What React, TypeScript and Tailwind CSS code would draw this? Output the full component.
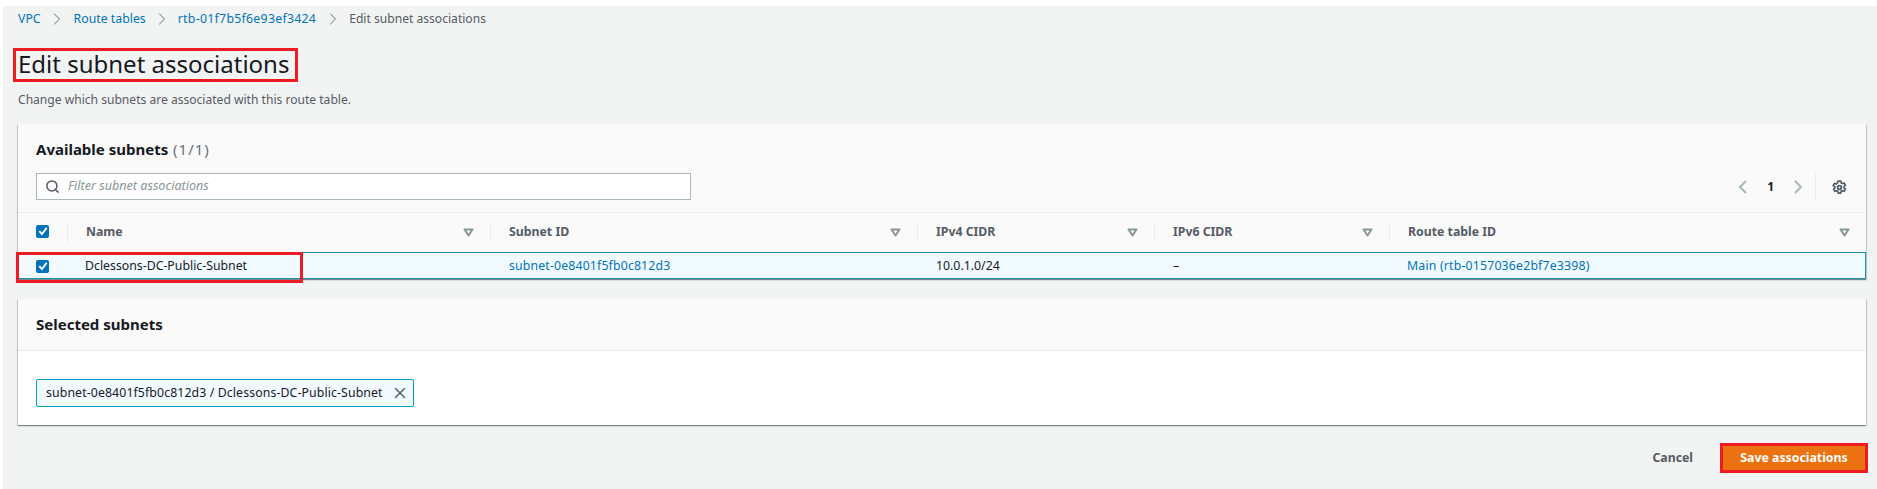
import { ChevronRight, Search, X } from 'lucide-react'

function SortIcon() {
  return (
    <svg width="11" height="9" viewBox="0 0 11 9" className="shrink-0">
      <path d="M1.5 1.5h8L5.5 7.5z" fill="none" stroke="#879596" strokeWidth="2" strokeLinejoin="round" />
    </svg>
  )
}

function Check() {
  return (
    <span className="flex h-[13px] w-[13px] items-center justify-center rounded-[2px] bg-[#0073bb]">
      <svg width="10" height="10" viewBox="0 0 10 10">
        <path d="M1.3 5.2 3.9 8 8.7 1.8" fill="none" stroke="white" strokeWidth="1.9" />
      </svg>
    </span>
  )
}

function Pager({ points }: { points: string }) {
  return (
    <svg width="10" height="14" viewBox="0 0 10 14">
      <path d={points} fill="none" stroke="#aab7b8" strokeWidth="2" />
    </svg>
  )
}

function Gear() {
  return (
    <svg width="15" height="15" viewBox="0 0 16 16" fill="none" stroke="#545b64">
      <circle cx="8" cy="8" r="2" strokeWidth="2" />
      <path
        d="M6.6 1.2h2.8l.4 1.9 1.2.7 1.9-.6 1.4 2.4-1.4 1.3v1.4l1.4 1.3-1.4 2.4-1.9-.6-1.2.7-.4 1.9H6.6l-.4-1.9-1.2-.7-1.9.6-1.4-2.4 1.4-1.3V7.3L1.2 6l1.4-2.4 1.9.6 1.2-.7z"
        strokeWidth="1.8"
        strokeLinejoin="round"
      />
    </svg>
  )
}

function HeadCell({ label }: { label: string }) {
  return (
    <div className="flex h-[20px] items-center justify-between border-l border-[#eaeded] pl-[18px] pr-[16px]">
      <span className="text-[12.3px] font-bold text-[#545b64]">{label}</span>
      <SortIcon />
    </div>
  )
}

const columns = 'grid grid-cols-[49px_423px_427px_237px_235px_1fr] items-center'

export default function App() {
  return (
    <div className="min-h-screen bg-white pl-[3px] pt-[6px] font-['Noto_Sans',sans-serif] text-[#16191f]">
      <div className="h-[483px] bg-[#f2f3f3] pl-[10px] pr-[11px]">
        {/* breadcrumbs */}
        <div className="flex h-[25px] items-center pl-[5px] pt-[1px] text-[12.3px] text-[#0073bb]">
          <span>VPC</span>
          <ChevronRight size={20} strokeWidth={1.2} className="ml-[6px] mr-[7px] text-[#687078]" />
          <span>Route tables</span>
          <ChevronRight size={20} strokeWidth={1.2} className="mx-[6px] text-[#687078]" />
          <span className="tracking-[0.28px]">rtb-01f7b5f6e93ef3424</span>
          <ChevronRight size={20} strokeWidth={1.2} className="ml-[7px] mr-[6px] text-[#687078]" />
          <span className="text-[12.1px] text-[#545b64]">Edit subnet associations</span>
        </div>

        {/* annotated title */}
        <div className="mt-[17px] flex h-[34px] w-[285px] items-center whitespace-nowrap border-[3px] border-[#ed1c24] pb-[2px] pl-[2px] text-[24px] leading-none">
          Edit subnet associations
        </div>
        <p className="mt-[9px] pl-[5px] text-[12.08px] leading-[18px] text-[#545b64]">
          Change which subnets are associated with this route table.
        </p>

        <section className="relative mt-[15px] ml-[5px] bg-white shadow-[0_1px_1px_0_rgba(0,28,36,0.3),1px_1px_1px_0_rgba(0,28,36,0.15),-1px_1px_1px_0_rgba(0,28,36,0.15)]">
          <div className="h-[89px] border-b border-[#eaeded] bg-[#fafafa] pl-[18px] pr-[18px] pt-[14px]">
            <h2 className="text-[15px] font-bold leading-[22px]">
              Available subnets{' '}
              <span className="ml-[1px] font-normal tracking-[1px] text-[#687078]">(1/1)</span>
            </h2>
            <div className="mt-[13px] flex items-start justify-between">
              <div className="flex h-[27px] w-[655px] items-center border border-[#aab7b8] bg-white pl-[8px]">
                <Search size={15} strokeWidth={2.4} className="text-[#545b64]" />
                <span className="mb-[1px] ml-[8px] text-[12.6px] italic text-[#879596]">Filter subnet associations</span>
              </div>
              <div className="mr-[1px] flex h-[28px] items-center">
                <Pager points="M8 1 2 7l6 6" />
                <span className="mx-[19px] text-[12px] font-bold">1</span>
                <Pager points="M2 1l6 6-6 6" />
                <span className="ml-[12px] h-[28px] border-l border-[#eaeded]" />
                <span className="ml-[16px]">
                  <Gear />
                </span>
              </div>
            </div>
          </div>

          <div className={`${columns} h-[39px] bg-[#fafafa]`}>
            <div className="mb-[3px] pl-[18px]">
              <Check />
            </div>
            <HeadCell label="Name" />
            <HeadCell label="Subnet ID" />
            <HeadCell label="IPv4 CIDR" />
            <HeadCell label="IPv6 CIDR" />
            <HeadCell label="Route table ID" />
          </div>

          <div className={`${columns} h-[27px] border border-[#1a8fb0] bg-[#f1faff] pt-[1px] text-[12.3px]`}>
            <div className="pl-[17px]">
              <Check />
            </div>
            <div className="pl-[17px]">Dclessons-DC-Public-Subnet</div>
            <div className="pl-[18px] tracking-[0.15px] text-[#0073bb]">subnet-0e8401f5fb0c812d3</div>
            <div className="pl-[18px]">10.0.1.0/24</div>
            <div className="pl-[18px]">–</div>
            <div className="pl-[17px] tracking-[0.18px] text-[#0073bb]">Main (rtb-0157036e2bf7e3398)</div>
          </div>

          {/* annotation round the selected row */}
          <div className="absolute left-[-2px] top-[128px] h-[31px] w-[287px] border-[3px] border-[#ed1c24]" />
        </section>

        <section className="mt-[20px] ml-[5px] bg-white shadow-[0_1px_1px_0_rgba(0,28,36,0.3),1px_1px_1px_0_rgba(0,28,36,0.15),-1px_1px_1px_0_rgba(0,28,36,0.15)]">
          <div className="flex h-[52px] items-center border-b border-[#eaeded] bg-[#fafafa] pl-[18px] text-[15px] font-bold">
            Selected subnets
          </div>
          <div className="h-[74px] pl-[18px] pt-[28px]">
            <div className="flex h-[28px] w-[378px] items-center rounded-[2px] border border-[#00a1c9] bg-[#f1faff] pl-[9px] text-[12.3px] tracking-[0.11px]">
              <span>subnet-0e8401f5fb0c812d3 / Dclessons-DC-Public-Subnet</span>
              <X size={18} strokeWidth={1.8} className="ml-auto mr-[4px] text-[#545b64]" />
            </div>
          </div>
        </section>

        <div className="mt-[18px] flex items-center justify-end">
          <span className="text-[12.3px] font-bold text-[#545b64]">Cancel</span>
          <button
            type="button"
            className="-mr-[2px] ml-[27px] h-[30px] w-[148px] border-[3px] border-[#ed1c24] bg-[#ec7211] text-[12.3px] font-bold text-white"
          >
            Save associations
          </button>
        </div>
      </div>
    </div>
  )
}
